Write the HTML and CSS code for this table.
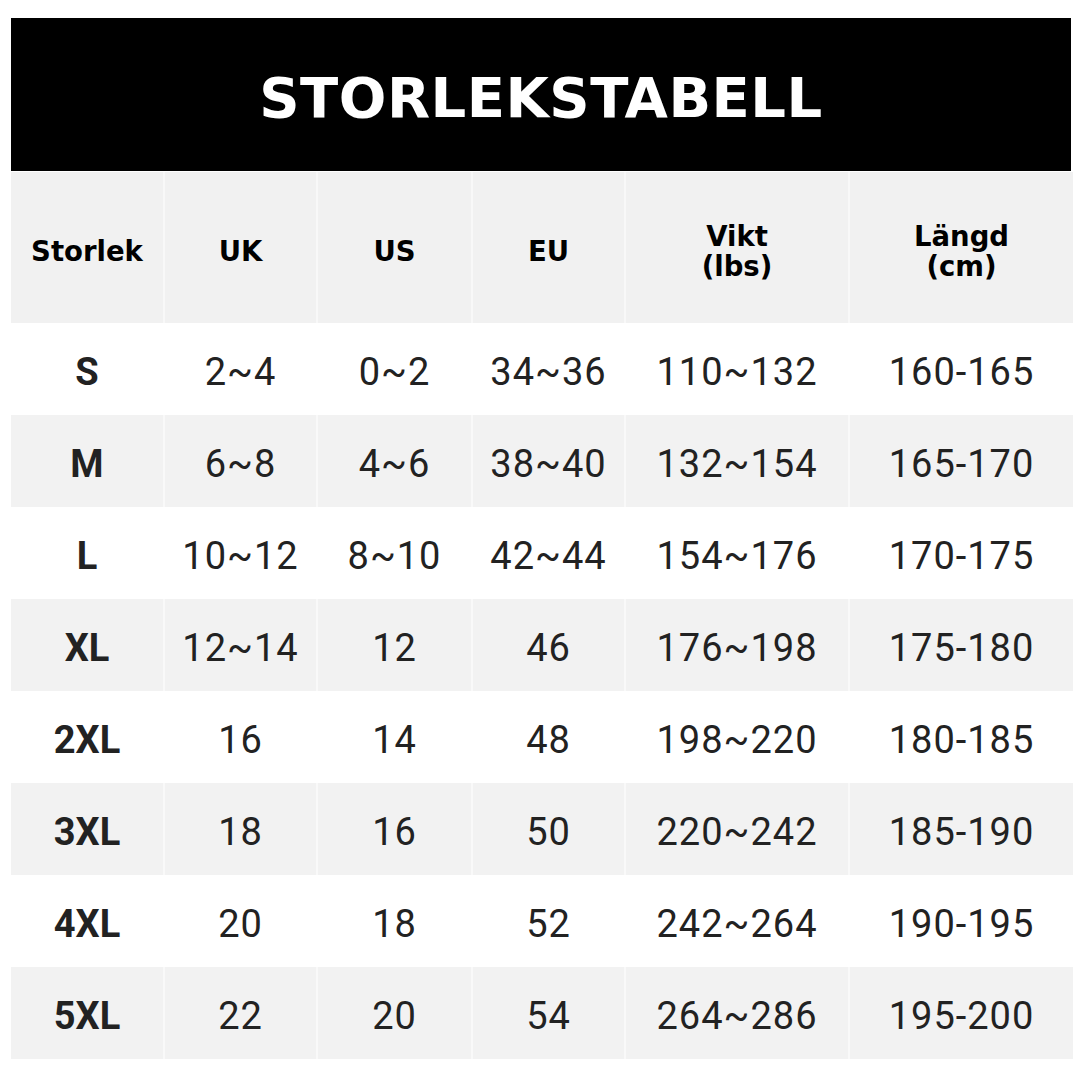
FILE: index.html
```html
<!DOCTYPE html>
<html lang="sv">
<head>
<meta charset="utf-8">
<title>Storlekstabell</title>
<link rel="stylesheet" href="styles.css">
</head>
<body>
<div class="page">
  <div class="banner"><h1 class="title">STORLEKSTABELL</h1></div>
  <div class="table">
    <div class="row head">
      <div class="cell">Storlek</div>
      <div class="cell">UK</div>
      <div class="cell">US</div>
      <div class="cell">EU</div>
      <div class="cell">Vikt<br>(lbs)</div>
      <div class="cell">Längd<br>(cm)</div>
    </div>
    <div class="row odd">
      <div class="cell size">S</div><div class="cell">2~4</div><div class="cell">0~2</div><div class="cell">34~36</div><div class="cell">110~132</div><div class="cell">160-165</div>
    </div>
    <div class="row even">
      <div class="cell size">M</div><div class="cell">6~8</div><div class="cell">4~6</div><div class="cell">38~40</div><div class="cell">132~154</div><div class="cell">165-170</div>
    </div>
    <div class="row odd">
      <div class="cell size">L</div><div class="cell">10~12</div><div class="cell">8~10</div><div class="cell">42~44</div><div class="cell">154~176</div><div class="cell">170-175</div>
    </div>
    <div class="row even">
      <div class="cell size">XL</div><div class="cell">12~14</div><div class="cell">12</div><div class="cell">46</div><div class="cell">176~198</div><div class="cell">175-180</div>
    </div>
    <div class="row odd">
      <div class="cell size">2XL</div><div class="cell">16</div><div class="cell">14</div><div class="cell">48</div><div class="cell">198~220</div><div class="cell">180-185</div>
    </div>
    <div class="row even">
      <div class="cell size">3XL</div><div class="cell">18</div><div class="cell">16</div><div class="cell">50</div><div class="cell">220~242</div><div class="cell">185-190</div>
    </div>
    <div class="row odd">
      <div class="cell size">4XL</div><div class="cell">20</div><div class="cell">18</div><div class="cell">52</div><div class="cell">242~264</div><div class="cell">190-195</div>
    </div>
    <div class="row even">
      <div class="cell size">5XL</div><div class="cell">22</div><div class="cell">20</div><div class="cell">54</div><div class="cell">264~286</div><div class="cell">195-200</div>
    </div>
  </div>
</div>
</body>
</html>
```
FILE: styles.css
```css
html, body {
  margin: 0;
  padding: 0;
  background: #ffffff;
}
.page {
  width: 1060px;
  padding: 18px 0 0 11px;
}
.banner {
  height: 153px;
  background: #000000;
  display: flex;
  align-items: center;
  justify-content: center;
}
.title {
  margin: 6px 0 0 0;
  color: #ffffff;
  font-family: "DejaVu Sans", sans-serif;
  font-weight: bold;
  font-size: 56px;
  letter-spacing: 0.5px;
}
.table {
  margin-top: 1px;
  display: flex;
  flex-direction: column;
}
.row {
  display: grid;
  grid-template-columns: 152px 151px 153px 151px 222px 223px;
  column-gap: 2px;
  height: 92px;
}
.row.head {
  height: 151px;
  background: #f8f8f8;
}
.row.even {
  background: #f9f9f9;
}
.cell {
  display: flex;
  align-items: center;
  justify-content: center;
  text-align: center;
  font-family: Roboto, "Liberation Sans", sans-serif;
  font-size: 38px;
  letter-spacing: 1px;
  color: #222222;
  padding-top: 5px;
  box-sizing: border-box;
}
.head .cell {
  background: #f1f1f1;
  font-family: "DejaVu Sans", sans-serif;
  font-weight: bold;
  font-size: 27.5px;
  letter-spacing: 0;
  line-height: 30px;
  color: #000000;
  padding-top: 6px;
}
.even .cell {
  background: #f2f2f2;
}
.odd .cell {
  background: #ffffff;
}
.cell.size {
  font-weight: bold;
  letter-spacing: 0;
}
```
